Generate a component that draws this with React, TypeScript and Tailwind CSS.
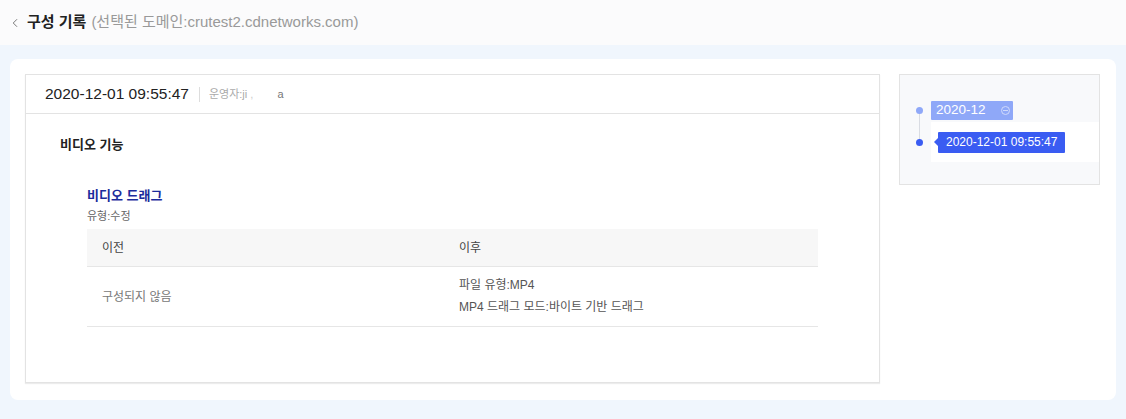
import { ChevronLeft } from "lucide-react"

export default function App() {
    return (
        <div className="w-[1126px] h-[419px] bg-[#f0f6fd] font-['Liberation_Sans','Noto_Sans_CJK_KR',sans-serif] text-[#333]">
            <div className="h-[45px] bg-[#fbfbfc] flex items-center pl-[8px]">
                <ChevronLeft className="w-[14px] h-[14px] text-[#666]" strokeWidth={1.5} />
                <span className="ml-[5px] text-[15px] font-bold text-[#222]">구성 기록</span>
                <span className="ml-[5px] text-[15px] text-[#999]">(선택된 도메인:crutest2.cdnetworks.com)</span>
            </div>
            <div className="pt-[14px] px-[10px]">
                <div className="h-[341px] bg-white rounded-[8px] pt-[15px] pl-[15px] pr-[15px] flex gap-[19px]">
                    <div className="w-[855px] h-[309px] border border-[#e3e3e3] shadow-[0_1px_1px_#ececec]">
                        <div className="h-[39px] border-b border-[#e3e3e3] flex items-center pl-[19px]">
                            <span className="text-[15.5px] text-[#222]">2020-12-01 09:55:47</span>
                            <span className="ml-[10px] w-px h-[15px] bg-[#ddd]"></span>
                            <span className="ml-[9px] text-[11px] text-[#aaa]">운영자:ji<span className="text-[#ccc]"> ,</span><span className="ml-[24px] text-[#777]">a</span></span>
                        </div>
                        <div className="pl-[34px] pt-[22px]">
                            <div className="text-[13px] font-bold text-[#222] leading-[18px]">비디오 기능</div>
                            <div className="pl-[27px] pt-[33px]">
                                <div className="text-[13px] font-bold text-[#1c2c9c] leading-[18px]">비디오 드래그</div>
                                <div className="text-[11px] text-[#666] mt-[4px] leading-[14px]">유형:수정</div>
                                <div className="w-[731px] mt-[6px]">
                                    <div className="h-[38px] bg-[#f7f7f7] border-b border-[#e6e6e6] flex items-center text-[12px] text-[#444]">
                                        <div className="w-[372px] pl-[15px]">이전</div>
                                        <div>이후</div>
                                    </div>
                                    <div className="h-[60px] border-b border-[#e6e6e6] flex items-center text-[12px] text-[#777]">
                                        <div className="w-[372px] pl-[15px]">구성되지 않음</div>
                                        <div className="flex flex-col gap-[5px] text-[#555] leading-[17px]">
                                            <span>파일 유형:MP4</span>
                                            <span>MP4 드래그 모드:바이트 기반 드래그</span>
                                        </div>
                                    </div>
                                </div>
                            </div>
                        </div>
                    </div>
                    <div className="w-[201px] h-[111px] border border-[#e3e3e3] bg-[#f8f9fb] pt-[26px]">
                        <div className="relative pl-[31px]">
                            <div className="absolute left-[19px] top-[9px] w-px h-[32px] bg-[#d9dce3]"></div>
                            <div className="absolute left-[16px] top-[6px] w-[7px] h-[7px] rounded-full bg-[#8fa8f8]"></div>
                            <div className="absolute left-[16px] top-[38px] w-[7px] h-[7px] rounded-full bg-[#3a5cf2]"></div>
                            <div className="w-[82px] h-[19px] bg-[#8fa8f8] text-white text-[13.5px] flex items-center pl-[5px] rounded-[1px]">
                                <span>2020-12</span>
                                <span className="ml-[15px] w-[9px] h-[9px] rounded-full border border-[#d0dafc] flex items-center justify-center">
                                    <span className="w-[5px] h-px bg-[#d0dafc]"></span>
                                </span>
                            </div>
                            <div className="bg-white h-[40px] mt-[2px] flex items-center pl-[7px]">
                                <div className="relative h-[21px] bg-[#3a5cf2] text-white text-[12px] flex items-center px-[8px] rounded-[1px]">
                                    <span className="absolute -left-[4px] top-[6px] w-0 h-0 border-y-[4px] border-y-transparent border-r-[4px] border-r-[#3a5cf2]"></span>
                                    2020-12-01 09:55:47
                                </div>
                            </div>
                        </div>
                    </div>
                </div>
            </div>
        </div>
    )
}
